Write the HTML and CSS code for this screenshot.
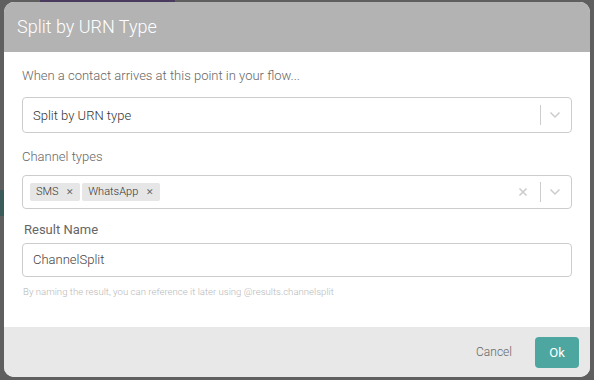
FILE: index.html
```html
<!DOCTYPE html>
<html lang="en">
<head>
  <meta charset="UTF-8" />
  <title>Split by URN Type</title>
  <link rel="stylesheet" href="styles.css">
</head>
<body>
  <div class="backdrop">
    <div class="peek-purple"></div>
    <div class="peek-teal"></div>

    <div class="dialog">
      <div class="dialog-header">Split by URN Type</div>

      <div class="dialog-body">
        <p class="intro">When a contact arrives at this point in your flow...</p>

        <div class="select">
          <span class="select-value">Split by URN type</span>
          <span class="indicators">
            <span class="sep"></span>
            <svg class="chevron" width="12" height="8" viewBox="0 0 12 8"><path d="M1.5 1.5 L6 6 L10.5 1.5" fill="none" stroke="#ccc" stroke-width="1.5"/></svg>
          </span>
        </div>

        <div class="field-label">Channel types</div>
        <div class="select multi">
          <span class="tags">
            <span class="tag">SMS <span class="tag-x">&#x2715;</span></span>
            <span class="tag">WhatsApp <span class="tag-x">&#x2715;</span></span>
          </span>
          <span class="indicators">
            <svg class="clear" width="10" height="10" viewBox="0 0 10 10"><path d="M1.5 1.5 L8.5 8.5 M8.5 1.5 L1.5 8.5" stroke="#ccc" stroke-width="1.6"/></svg>
            <span class="sep"></span>
            <svg class="chevron" width="12" height="8" viewBox="0 0 12 8"><path d="M1.5 1.5 L6 6 L10.5 1.5" fill="none" stroke="#ccc" stroke-width="1.5"/></svg>
          </span>
        </div>

        <div class="result-label">Result Name</div>
        <div class="text-input">ChannelSplit</div>
        <p class="help">By naming the result, you can reference it later using @results.channelsplit</p>
      </div>

      <div class="dialog-footer">
        <button type="button" class="btn-cancel">Cancel</button>
        <button type="button" class="btn-ok">Ok</button>
      </div>
    </div>
  </div>
</body>
</html>
```

FILE: styles.css
```css
body {
  margin: 0;
  font-family: Roboto, "Noto Sans", sans-serif;
  background: #5f5f5f;
}
.backdrop {
  position: relative;
  width: 594px;
  height: 380px;
  padding: 2px 4px 3px 4px;
  box-sizing: border-box;
  overflow: hidden;
}
/* bits of the canvas peeking out behind the overlay */
.peek-purple {
  position: absolute;
  left: 40px;
  top: 0;
  width: 135px;
  height: 3px;
  background: #4a3a5e;
}
.peek-teal {
  position: absolute;
  left: 0;
  top: 190px;
  width: 4px;
  height: 26px;
  background: #3b5a5a;
}
.dialog {
  position: relative;
  height: 375px;
  display: flex;
  flex-direction: column;
  border-radius: 10px;
  overflow: hidden;
  background: #fff;
}
.dialog-header {
  height: 50px;
  flex-shrink: 0;
  background: #b3b3b3;
  color: #fff;
  font-size: 18px;
  font-weight: 300;
  padding: 0 13px;
  line-height: 50px;
}
.dialog-body {
  flex: 1;
  padding: 15px 18px 0 18px;
}
.intro {
  margin: 0 0 12px;
  font-size: 13px;
  font-weight: 300;
  color: #666;
  line-height: 18px;
}
.select {
  display: flex;
  align-items: center;
  height: 36px;
  box-sizing: border-box;
  border: 1px solid #ccc;
  border-radius: 4px;
  padding-left: 10px;
}
.select-value {
  flex: 1;
  font-size: 13px;
  font-weight: 300;
  color: #333;
}
.indicators {
  display: flex;
  align-items: center;
  height: 100%;
}
.sep {
  width: 1px;
  height: 20px;
  background: #ccc;
  margin: 0 8px 0 8px;
}
.chevron {
  margin-right: 10px;
}
.clear {
  margin-right: 4px;
}
.field-label {
  margin: 15px 0 9px;
  font-size: 13px;
  font-weight: 300;
  color: #666;
  line-height: 18px;
}
.multi {
  height: 34px;
  padding-left: 7px;
}
.tags {
  flex: 1;
  display: flex;
  gap: 2px;
}
.tag {
  background: #e6e6e6;
  border-radius: 2px;
  font-size: 11px;
  font-weight: 300;
  color: #333;
  padding: 2px 6px 2px 6px;
  line-height: 14px;
}
.tag-x {
  font-size: 9px;
  color: #666;
  margin-left: 5px;
}
.result-label {
  margin: 12px 0 4px 2px;
  font-size: 13px;
  font-weight: 400;
  color: #666;
  line-height: 18px;
}
.text-input {
  height: 34px;
  box-sizing: border-box;
  border: 1px solid #ccc;
  border-radius: 4px;
  padding: 0 10px;
  font-size: 13px;
  font-weight: 300;
  color: #444;
  line-height: 32px;
}
.help {
  margin: 9px 0 0 1px;
  font-size: 9.6px;
  font-weight: 300;
  color: #b8b8b8;
}
.dialog-footer {
  height: 50px;
  flex-shrink: 0;
  background: #e8e8e8;
  display: flex;
  align-items: center;
  justify-content: flex-end;
  padding-right: 11px;
}
.btn-cancel {
  background: none;
  border: none;
  font-family: inherit;
  font-size: 12px;
  font-weight: 300;
  color: #666;
  margin-right: 23px;
  padding: 0;
}
.btn-ok {
  background: #4da6a0;
  color: #fff;
  border: none;
  font-family: inherit;
  font-size: 13px;
  width: 44px;
  height: 31px;
  border-radius: 4px;
}
```
